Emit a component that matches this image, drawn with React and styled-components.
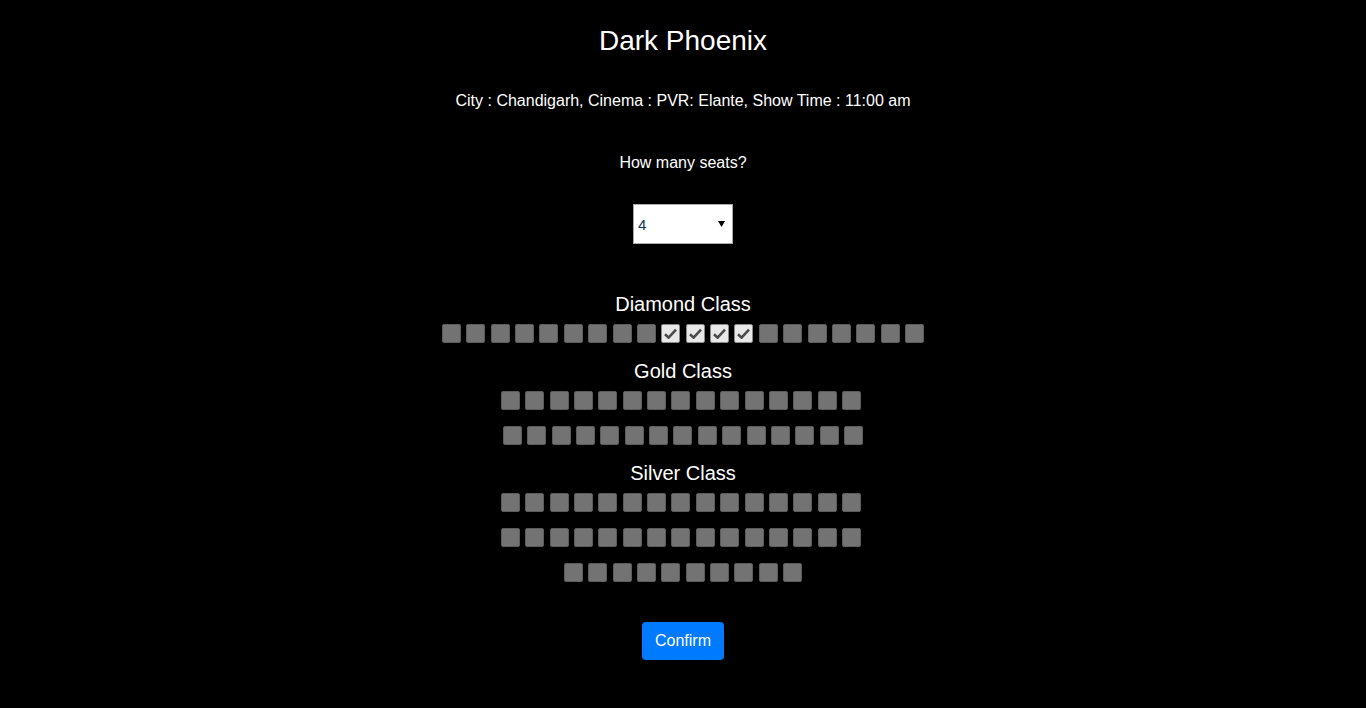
import styled, { createGlobalStyle } from "styled-components";

const GlobalStyle = createGlobalStyle`
	html, body {
		margin: 0;
		padding: 0;
		background: #000;
	}
	body {
		font-family: "Liberation Sans", Arial, sans-serif;
		color: #fff;
	}
`;

// nudge: rows that the original page rendered a couple of px left of centre
const seatClasses = [
	{ name: "Diamond Class", rows: [{ count: 20, taken: [9, 10, 11, 12] }] },
	{ name: "Gold Class", rows: [{ count: 15, nudge: true }, { count: 15 }] },
	{ name: "Silver Class", rows: [{ count: 15, nudge: true }, { count: 15, nudge: true }, { count: 10 }] },
];

const Check = () => (
	<svg width="13" height="11" viewBox="0 0 13 11">
		<path d="M1 6.2 L4.6 9.6 L12 1.6" fill="none" stroke="#4a4a4a" strokeWidth="2.6" strokeLinejoin="miter" />
	</svg>
);

const App = () => {
	return (
		<Page>
			<GlobalStyle />
			<Title>Dark Phoenix</Title>
			<Info>City : Chandigarh, Cinema : PVR: Elante, Show Time : 11:00 am</Info>
			<Question>How many seats?</Question>
			<SelectBox defaultValue="4">
				{[1, 2, 3, 4, 5, 6, 7, 8].map((n) => (
					<option key={n} value={n}>
						{n}
					</option>
				))}
			</SelectBox>
			<Hall>
				{seatClasses.map((c) => (
					<section key={c.name}>
						<ClassName>{c.name}</ClassName>
						{c.rows.map((r, i) => (
							<SeatRow key={i} $nudge={r.nudge}>
								{Array.from({ length: r.count }).map((_, j) => {
									const picked = r.taken?.includes(j);
									return (
										<Seat key={j} $picked={picked}>
											{picked && <Check />}
										</Seat>
									);
								})}
							</SeatRow>
						))}
					</section>
				))}
			</Hall>
			<ConfirmButton>Confirm</ConfirmButton>
		</Page>
	);
};

const Page = styled.div`
	display: flex;
	flex-direction: column;
	align-items: center;
	padding-top: 25px;
	min-height: 708px;
	box-sizing: border-box;
`;

const Title = styled.h1`
	margin: 0;
	font-size: 28px;
	font-weight: normal;
	line-height: 32px;
`;

const Info = styled.p`
	margin: 35px 0 0;
	font-size: 16px;
	line-height: 18px;
`;

const Question = styled.p`
	margin: 44px 0 0;
	font-size: 16px;
	line-height: 18px;
`;

const SelectBox = styled.select`
	margin-top: 32px;
	width: 100px;
	height: 40px;
	padding: 0 4px;
	background: #fff;
	border: 1px solid #a9a9a9;
	border-radius: 0;
	font-family: "Liberation Sans", Arial, sans-serif;
	font-size: 15px;
	color: #10355a;
	appearance: none;
	background-image: url("data:image/svg+xml;utf8,<svg xmlns='http://www.w3.org/2000/svg' width='7' height='6'><path d='M0 0 L7 0 L3.5 6 Z' fill='black'/></svg>");
	background-repeat: no-repeat;
	background-position: right 7px center;
`;

const Hall = styled.div`
	margin-top: 48px;
	display: flex;
	flex-direction: column;
	gap: 16px;
`;

const ClassName = styled.h3`
	margin: 0 0 8px;
	font-size: 20px;
	font-weight: normal;
	line-height: 24px;
	text-align: center;
`;

const SeatRow = styled.div`
	display: flex;
	justify-content: center;
	gap: 5.4px;
	margin-right: ${(p) => (p.$nudge ? "4px" : "0")};

	& + & {
		margin-top: 16px;
	}
`;

const Seat = styled.span`
	width: 19px;
	height: 19px;
	box-sizing: border-box;
	display: flex;
	align-items: center;
	justify-content: center;
	border-radius: 2px;
	border: 1px solid ${(p) => (p.$picked ? "#8a8a8a" : "#5c5c5c")};
	background: ${(p) => (p.$picked ? "#e8e8e8" : "#737373")};
`;

const ConfirmButton = styled.button`
	margin-top: 40px;
	height: 38px;
	padding: 0 13px;
	border: none;
	border-radius: 4px;
	background: #007bff;
	color: #fff;
	font-family: "Liberation Sans", Arial, sans-serif;
	font-size: 16px;
	cursor: pointer;
`;

export default App;
